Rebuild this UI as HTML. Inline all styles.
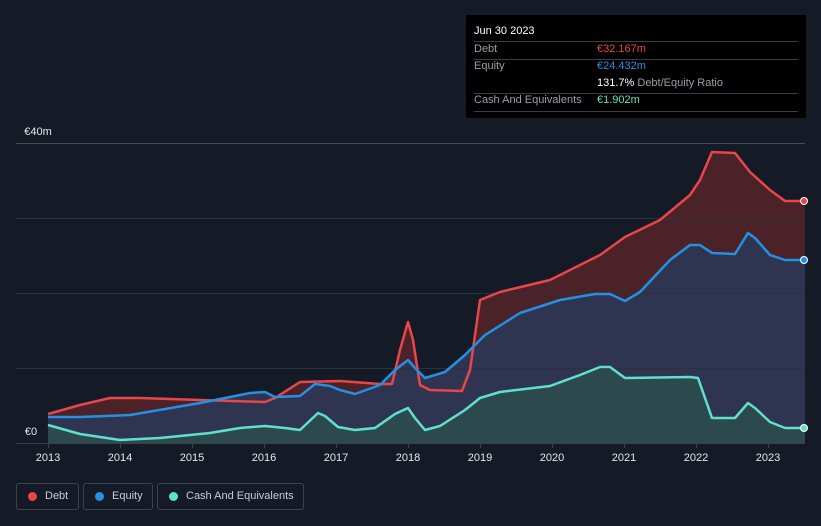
<!DOCTYPE html><html><head><style>
body{margin:0;width:821px;height:526px;background:#151b26;font-family:"Liberation Sans",sans-serif;overflow:hidden;position:relative}
.t{position:absolute;left:466px;top:15px;width:340px;height:103px;background:#000;font-size:11px;color:#9a9ea6}
.t div{position:absolute;white-space:nowrap}
.ln{left:8px;width:324px;height:1px;background:#3a3d44}
.lg{position:absolute;top:483px;height:27px;border:1px solid #3c424d;border-radius:3px;box-sizing:border-box;color:#c9ccd2;font-size:11px;line-height:25px;white-space:nowrap}
.lg i{position:absolute;left:11px;top:8px;width:9px;height:9px;border-radius:50%}
</style></head><body>
<svg width="821" height="526" style="position:absolute;left:0;top:0">
<polygon fill="#4a2228" points="48,443 48,414 80,405 110,398 140,398 200,400 265,402 275,398 300,382 340,381 380,384 392,384 400,350 408,322 413,340 420,385 430,390 462,391 470,370 480,300 500,292 550,280 600,255 625,237 660,220 690,195 700,180 712,152 735,153 750,172 770,190 785,201 805,201 805,443"/>
<polygon fill="#2f3550" points="48,443 48,417 80,417 130,415 200,403 250,393 265,392 275,397 300,396 315,384 330,386 340,390 355,394 380,385 395,370 408,360 415,368 425,378 445,372 465,355 485,335 520,313 560,300 595,294 610,294 625,301 640,292 670,260 690,245 700,245 712,253 735,254 748,233 755,238 770,255 785,260 805,260 805,443"/>
<polygon fill="#2c4a4e" points="48,443 48,425 80,434 120,440 160,438 210,433 240,428 265,426 285,428 300,430 318,413 325,416 338,427 355,430 375,428 395,414 408,408 415,418 425,430 440,426 465,410 480,398 500,392 550,386 580,375 600,367 610,367 625,378 690,377 698,378 712,418 735,418 748,403 755,408 770,422 785,428 805,428 805,443"/>
<g stroke="#2c313b" stroke-width="1">
<line x1="16" y1="143.5" x2="805" y2="143.5" stroke="#474b53"/><line x1="16" y1="218.5" x2="805" y2="218.5"/><line x1="16" y1="293.5" x2="805" y2="293.5"/><line x1="16" y1="368.5" x2="805" y2="368.5"/>
</g>
<g fill="none" stroke-width="2.5" stroke-linejoin="round">
<polyline stroke="#e8464a" points="48,414 80,405 110,398 140,398 200,400 265,402 275,398 300,382 340,381 380,384 392,384 400,350 408,322 413,340 420,385 430,390 462,391 470,370 480,300 500,292 550,280 600,255 625,237 660,220 690,195 700,180 712,152 735,153 750,172 770,190 785,201 805,201"/>
<polyline stroke="#2590e3" points="48,417 80,417 130,415 200,403 250,393 265,392 275,397 300,396 315,384 330,386 340,390 355,394 380,385 395,370 408,360 415,368 425,378 445,372 465,355 485,335 520,313 560,300 595,294 610,294 625,301 640,292 670,260 690,245 700,245 712,253 735,254 748,233 755,238 770,255 785,260 805,260"/>
<polyline stroke="#5fe0cc" points="48,425 80,434 120,440 160,438 210,433 240,428 265,426 285,428 300,430 318,413 325,416 338,427 355,430 375,428 395,414 408,408 415,418 425,430 440,426 465,410 480,398 500,392 550,386 580,375 600,367 610,367 625,378 690,377 698,378 712,418 735,418 748,403 755,408 770,422 785,428 805,428"/>
</g>
<circle cx="804" cy="201" r="3.5" fill="#e8464a" stroke="#fff" stroke-width="1"/>
<circle cx="804" cy="260" r="3.5" fill="#2590e3" stroke="#fff" stroke-width="1"/>
<circle cx="804" cy="428" r="3.5" fill="#5fe0cc" stroke="#fff" stroke-width="1"/>
<line x1="16" y1="443.5" x2="805" y2="443.5" stroke="#3a404a"/>
<g stroke="#3a404a"><line x1="48.5" y1="443" x2="48.5" y2="448"/><line x1="120.5" y1="443" x2="120.5" y2="448"/><line x1="192.5" y1="443" x2="192.5" y2="448"/><line x1="264.5" y1="443" x2="264.5" y2="448"/><line x1="336.5" y1="443" x2="336.5" y2="448"/><line x1="408.5" y1="443" x2="408.5" y2="448"/><line x1="480.5" y1="443" x2="480.5" y2="448"/><line x1="552.5" y1="443" x2="552.5" y2="448"/><line x1="624.5" y1="443" x2="624.5" y2="448"/><line x1="696.5" y1="443" x2="696.5" y2="448"/><line x1="768.5" y1="443" x2="768.5" y2="448"/></g>
<g fill="#e4e6ea" font-size="11" font-family="Liberation Sans" text-anchor="middle">
<text x="48" y="461">2013</text><text x="120" y="461">2014</text><text x="192" y="461">2015</text><text x="264" y="461">2016</text><text x="336" y="461">2017</text><text x="408" y="461">2018</text><text x="480" y="461">2019</text><text x="552" y="461">2020</text><text x="624" y="461">2021</text><text x="696" y="461">2022</text><text x="768" y="461">2023</text>
<text x="38" y="135">€40m</text><text x="31" y="435">€0</text>
</g>
</svg>
<div class="t">
<div style="left:8px;top:10px;color:#fff">Jun 30 2023</div>
<div class="ln" style="top:26px"></div>
<div style="left:8px;top:28px">Debt</div><div style="left:131px;top:28px;color:#e8464a">€32.167m</div>
<div class="ln" style="top:44px"></div>
<div style="left:8px;top:45px">Equity</div><div style="left:131px;top:45px;color:#2590e3">€24.432m</div>
<div style="left:131px;top:62px"><b style="color:#fff;font-weight:normal">131.7%</b> Debt/Equity Ratio</div>
<div class="ln" style="top:78px"></div>
<div style="left:8px;top:79px">Cash And Equivalents</div><div style="left:131px;top:79px;color:#5fe0cc">€1.902m</div>
<div class="ln" style="top:96px"></div>
</div>
<div class="lg" style="left:16px;width:63px"><i style="background:#e8464a"></i><span style="position:absolute;left:28px">Debt</span></div>
<div class="lg" style="left:83px;width:70px"><i style="background:#2590e3"></i><span style="position:absolute;left:28px">Equity</span></div>
<div class="lg" style="left:157px;width:147px"><i style="background:#5fe0cc"></i><span style="position:absolute;left:28px">Cash And Equivalents</span></div>
</body></html>
